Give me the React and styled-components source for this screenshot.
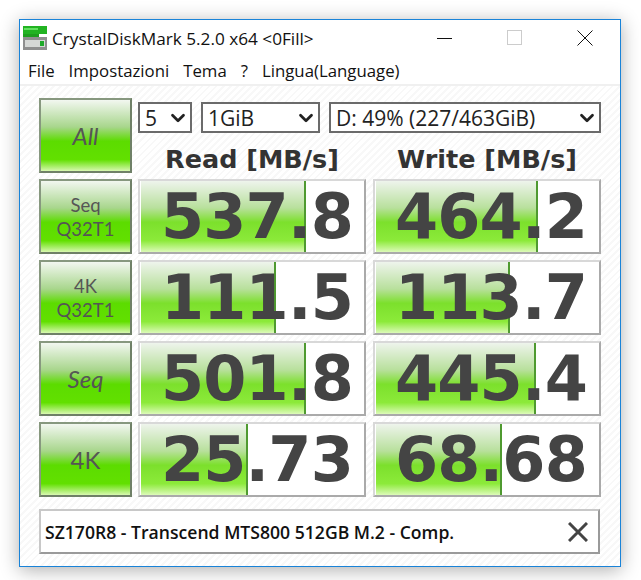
import React from 'react'
import styled, { createGlobalStyle } from 'styled-components'
import { ChevronDown } from 'lucide-react'

const GlobalStyle = createGlobalStyle`
    html, body {
        margin: 0;
        padding: 0;
        background: #fff;
    }
`

const Page = styled.div`
    width: 641px;
    height: 580px;
    padding: 19px 20px 13px 19px;
    box-sizing: border-box;
    overflow: hidden;
`

const Window = styled.div`
    height: 548px;
    box-sizing: border-box;
    border: 1px solid #1983d8;
    background: #fff;
    box-shadow: 0 3px 18px rgba(0, 0, 0, 0.32);
    display: flex;
    flex-direction: column;
`

const TitleBar = styled.div`
    height: 36px;
    flex: none;
    display: flex;
    align-items: center;
    padding-left: 3px;
    font-family: "Open Sans", sans-serif;
    font-size: 17.2px;
    color: #111;
`

const TitleText = styled.span`
    margin-left: 5px;
    flex: 1;
    white-space: nowrap;
`

const WinButton = styled.div`
    width: 70px;
    height: 36px;
    display: flex;
    align-items: center;
    justify-content: center;
`

const MenuBar = styled.div`
    height: 28px;
    flex: none;
    display: flex;
    align-items: center;
    gap: 14px;
    padding-left: 8px;
    font-family: "Open Sans", sans-serif;
    font-size: 16.8px;
    color: #111;
    border-bottom: 2px solid #f0f0f0;
`

const Content = styled.div`
    flex: 1;
    padding: 12px 19px 0;
    background: repeating-linear-gradient(135deg, #fff 0 3px, #f8f8f8 3px 5px);
`

const Grid = styled.div`
    display: grid;
    grid-template-columns: 93px 228px 229px;
    column-gap: 6px;
    row-gap: 6px;
`

const GreenButton = styled.div`
    box-sizing: border-box;
    height: 75px;
    border: 2px solid #87987f;
    border-right-color: #6f8067;
    border-bottom-color: #6f8067;
    background: linear-gradient(180deg, #f2f7f0 0%, #a8d68c 38%, #5cdc00 58%, #62e000 84%, #d8f8b0 100%);
    display: flex;
    flex-direction: column;
    align-items: center;
    justify-content: center;
    font-family: "Lato", sans-serif;
    color: #555;
    font-size: ${p => p.$big ? 24 : 18.5}px;
    font-style: ${p => p.$slant ? 'italic' : 'normal'};
    line-height: 24px;
`

const TopControls = styled.div`
    grid-column: 2 / 4;
    display: flex;
    flex-direction: column;
`

const SelectRow = styled.div`
    margin-top: 4px;
    display: flex;
    gap: 9px;
`

const SelectBox = styled.div`
    box-sizing: border-box;
    height: 31px;
    width: ${p => p.$width}px;
    border: 2px solid #6b6b6b;
    background: #fff;
    display: flex;
    align-items: center;
    justify-content: space-between;
    padding: 0 1px 0 5px;
    font-family: "Open Sans", sans-serif;
    font-size: 21px;
    color: #222;
    white-space: nowrap;
`

const HeaderRow = styled.div`
    display: grid;
    grid-template-columns: 228px 229px;
    column-gap: 6px;
`

const ColumnTitle = styled.div`
    height: 40px;
    line-height: 52px;
    text-align: center;
    font-family: "DejaVu Sans", sans-serif;
    font-weight: bold;
    font-size: 25.5px;
    color: #333;
    margin-left: ${p => p.$write ? 1 : 0}px;
`

const Meter = styled.div`
    position: relative;
    box-sizing: border-box;
    height: 75px;
    border: 2px solid #d8d8d8;
    border-right-color: #aaa;
    border-bottom-color: #aaa;
    background: #fff;
    overflow: hidden;
    text-align: right;
    padding-right: ${p => p.$write ? 12 : 11}px;
    margin-left: ${p => p.$write ? 1 : 0}px;
    font-family: "DejaVu Sans", sans-serif;
    font-weight: bold;
    font-size: 62px;
    letter-spacing: -0.8px;
    line-height: 71px;
    color: #444;
`

const MeterFill = styled.div`
    position: absolute;
    left: 1px;
    top: 0;
    bottom: 0;
    box-sizing: border-box;
    border-right: 2px solid #4f9a30;
    background: linear-gradient(180deg, #eef4ec 0%, #b8e09c 38%, #7ce02c 58%, #8cea3a 84%, #dcfab8 100%);
`

const MeterValue = styled.span`
    position: relative;
`

const BottomBar = styled.div`
    box-sizing: border-box;
    margin-top: 12px;
    width: 561px;
    height: 45px;
    border: 2px solid #c8c8c8;
    border-right-color: #9a9a9a;
    border-bottom-color: #9a9a9a;
    background: #fff;
    display: flex;
    align-items: center;
    justify-content: space-between;
    padding: 0 10px 0 4px;
    font-family: "Open Sans", sans-serif;
    font-weight: 600;
    font-size: 17.6px;
    color: #111;
`

const AppIcon = () => (
    <svg width="24" height="24" viewBox="0 0 24 24">
        <rect x="0" y="0" width="24" height="8" fill="#22b322" />
        <rect x="1" y="2" width="14" height="2" fill="#62e060" />
        <rect x="0" y="8" width="16" height="3" fill="#1e9e1e" />
        <rect x="0" y="11" width="24" height="13" fill="#8f8f8f" />
        <rect x="2" y="14" width="20" height="7" fill="#d6d8d6" />
        <rect x="17" y="15" width="4" height="5" fill="#1faa2a" />
    </svg>
)

const data = [
    { label: ['Seq', 'Q32T1'], read: '537.8', readFill: 165, write: '464.2', writeFill: 162 },
    { label: ['4K', 'Q32T1'], read: '111.5', readFill: 135, write: '113.7', writeFill: 134 },
    { label: ['Seq'], slant: true, big: true, read: '501.8', readFill: 165, write: '445.4', writeFill: 160 },
    { label: ['4K'], big: true, read: '25.73', readFill: 107, write: '68.68', writeFill: 126 },
]

const Row = ({ row }) => (
    <>
        <GreenButton $big={row.big} $slant={row.slant}>
            {row.label.map(l => <div key={l}>{l}</div>)}
        </GreenButton>
        <Meter>
            <MeterFill style={{ width: row.readFill }} />
            <MeterValue>{row.read}</MeterValue>
        </Meter>
        <Meter $write>
            <MeterFill style={{ width: row.writeFill }} />
            <MeterValue>{row.write}</MeterValue>
        </Meter>
    </>
)

const App = () => (
    <Page>
        <GlobalStyle />
        <Window>
            <TitleBar>
                <AppIcon />
                <TitleText>CrystalDiskMark 5.2.0 x64 &lt;0Fill&gt;</TitleText>
                <WinButton>
                    <svg width="16" height="16"><path d="M0 8.5H15" stroke="#111" /></svg>
                </WinButton>
                <WinButton>
                    <svg width="16" height="16"><rect x="0.5" y="0.5" width="14" height="14" fill="none" stroke="#ccc" /></svg>
                </WinButton>
                <WinButton>
                    <svg width="16" height="16"><path d="M0.5 0.5L15.5 15.5M15.5 0.5L0.5 15.5" stroke="#111" /></svg>
                </WinButton>
            </TitleBar>
            <MenuBar>
                <span>File</span>
                <span>Impostazioni</span>
                <span>Tema</span>
                <span>?</span>
                <span>Lingua(Language)</span>
            </MenuBar>
            <Content>
                <Grid>
                    <GreenButton $big $slant>All</GreenButton>
                    <TopControls>
                        <SelectRow>
                            <SelectBox $width={54}>5 <ChevronDown size={22} strokeWidth={3} color="#222" /></SelectBox>
                            <SelectBox $width={119}>1GiB <ChevronDown size={22} strokeWidth={3} color="#222" /></SelectBox>
                            <SelectBox $width={272}>D: 49% (227/463GiB) <ChevronDown size={22} strokeWidth={3} color="#222" /></SelectBox>
                        </SelectRow>
                        <HeaderRow>
                            <ColumnTitle>Read [MB/s]</ColumnTitle>
                            <ColumnTitle $write>Write [MB/s]</ColumnTitle>
                        </HeaderRow>
                    </TopControls>
                    {data.map(row => <Row key={row.read} row={row} />)}
                </Grid>
                <BottomBar>
                    <span>SZ170R8 - Transcend MTS800 512GB M.2 - Comp.</span>
                    <svg width="20" height="20"><path d="M1 1L19 19M19 1L1 19" stroke="#444" strokeWidth="3" /></svg>
                </BottomBar>
            </Content>
        </Window>
    </Page>
)

export default App
